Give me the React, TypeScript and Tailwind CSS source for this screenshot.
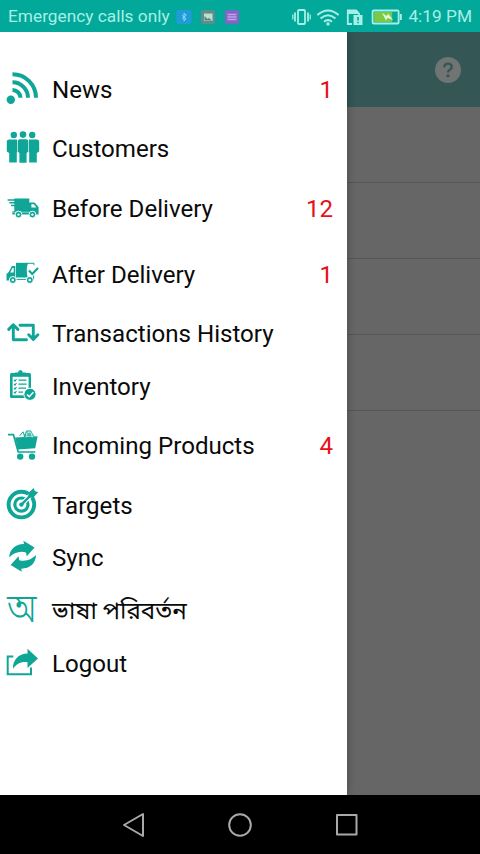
import React from 'react';

const TEAL = '#0fa697';

const icons: Record<string, React.ReactNode> = {
  news: (
    <>
      <circle cx="10.8" cy="31.8" r="4.2" fill={TEAL} />
      <g fill="none" stroke={TEAL} strokeWidth="4">
        <path d="M12.5 6.3A23.5 23.5 0 0 1 36 29.8" />
        <path d="M12.5 14.3A15.5 15.5 0 0 1 28 29.8" />
        <path d="M12.5 22A8 8 0 0 1 20.5 29.8" />
      </g>
    </>
  ),
  customers: (
    <g fill={TEAL}>
      <circle cx="13.8" cy="8" r="3.2" />
      <circle cx="23" cy="7.6" r="3.3" />
      <circle cx="32.2" cy="8" r="3.2" />
      <path d="M9 12.6h8.2v12.6h-.4v10.3H9.2V26L6.8 24.4v-9.6Q6.8 12.6 9 12.6z" />
      <path d="M37 12.6h-8.2v12.6h.4v10.3h7.6V26l2.4-1.6v-9.6q0-2.2-2.2-2.2z" />
      <path d="M19.8 12.2h6.4q2 0 2 2.2v10l-1.6 1.8v9.6h-7.2v-9.6l-1.6-1.8v-10q0-2.2 2-2.2z" />
    </g>
  ),
  before: (
    <>
      <path d="M7.6 13H16M9.3 15.8H16M11 18.5H16" stroke={TEAL} strokeWidth="1.5" />
      <path d="M14.3 11.5H29.3V15.4H34.6L38.6 20.2V27.5H12.4V24.2H14.3z" fill={TEAL} />
      <path d="M31.4 17.3H33.8L36.4 20.5H31.4z" fill="#fff" />
      <path d="M13 25.2H29" stroke="#fff" strokeWidth=".5" />
      <g fill={TEAL} stroke="#fff" strokeWidth="1">
        <circle cx="18.5" cy="27.6" r="3.4" />
        <circle cx="32.4" cy="27.6" r="3.4" />
      </g>
      <circle cx="18.5" cy="27.6" r="1.2" fill="#fff" />
      <circle cx="32.4" cy="27.6" r="1.2" fill="#fff" />
    </>
  ),
  after: (
    <>
      <path d="M15.3 13H12L8.7 19L6.5 21V27.6H15.3z" fill={TEAL} />
      <path d="M13.7 15H12.5L10.2 19.4H13.7z" fill="#fff" />
      <path d="M16 10H28Q25.6 17 27.8 24.6H16z" fill={TEAL} />
      <path d="M16.2 10.3H34V12.2M15.3 26.4H33.6V22.5" fill="none" stroke={TEAL} strokeWidth="1" />
      <path d="M29 17.6L32.2 21L38 15" fill="none" stroke={TEAL} strokeWidth="2.2" />
      <g fill={TEAL} stroke="#fff" strokeWidth="1">
        <circle cx="12.8" cy="27" r="3.5" />
        <circle cx="29.8" cy="27" r="3.5" />
      </g>
      <circle cx="12.8" cy="27" r="1.3" fill="#fff" />
      <circle cx="29.8" cy="27" r="1.3" fill="#fff" />
    </>
  ),
  transactions: (
    <g fill="none" stroke={TEAL} strokeWidth="2.9" strokeLinecap="round" strokeLinejoin="round">
      <path d="M8.7 17.4L13.3 12.8L17.9 17.4M13.3 13.5V27.8H26.5" />
      <path d="M20 13.2H33.3V27M28.7 22.8L33.3 27.4L37.9 22.8" />
    </g>
  ),
  inventory: (
    <>
      <rect x="10" y="8" width="21" height="25" rx="1.5" fill={TEAL} />
      <path d="M15 11.2V7.5H18Q18.4 5 20.4 5T22.8 7.5H25.8V11.2z" fill={TEAL} />
      <rect x="12.6" y="11.8" width="16" height="18.5" fill="#fff" />
      <path d="M14 15l1 1l1.5-2M14 19l1 1l1.5-2M14 23l1 1l1.5-2M14 27l1 1l1.5-2M18.5 15.2H26.5M18.5 19.2H26.5M18.5 23.2H26M18.5 27.2H23" fill="none" stroke={TEAL} strokeWidth="1.2" />
      <circle cx="30" cy="29.3" r="6.1" fill={TEAL} stroke="#fff" strokeWidth="1" />
      <path d="M27 29.5L29.2 31.7L33.4 27.2" fill="none" stroke="#fff" strokeWidth="1.5" />
    </>
  ),
  incoming: (
    <>
      <path d="M8 10.6H13.4L18.2 28H35.3" fill="none" stroke={TEAL} strokeWidth="1.7" />
      <path d="M15 13.4L24 13L25.5 9.6L27 13L37.6 12.2L35.2 24.2L17.8 25.4z" fill={TEAL} />
      <path d="M23.5 12.6L26.2 6.6L30.8 6.2L34.6 12.6z" fill={TEAL} opacity=".75" />
      <path d="M26 13.5Q26.5 8 29.2 8Q31.8 8 32.2 13.5" fill="none" stroke="#fff" strokeWidth=".8" />
      <path d="M19.7 11.8L23 7.8L24.5 12" fill="none" stroke={TEAL} strokeWidth="1" />
      <circle cx="20.2" cy="32.6" r="3.2" fill={TEAL} />
      <circle cx="32" cy="32.6" r="3.2" fill={TEAL} />
    </>
  ),
  targets: (
    <>
      <circle cx="21.4" cy="20.6" r="12.8" fill="none" stroke={TEAL} strokeWidth="3.9" />
      <circle cx="21.4" cy="20.6" r="6.6" fill="none" stroke={TEAL} strokeWidth="3.2" />
      <path d="M22.4 19.6L33.5 8.5" stroke="#fff" strokeWidth="4.6" />
      <circle cx="21.4" cy="20.6" r="2.2" fill={TEAL} />
      <path d="M21.4 20.6L34 8" stroke={TEAL} strokeWidth="2.4" />
      <path d="M28.2 12.8L28.6 8.8L33.6 4L34.8 7.1L38.2 8.2L33.6 13.2L29.4 14z" fill={TEAL} />
    </>
  ),
  sync: (
    <g fill={TEAL}>
      <path d="M9.2 21.5C9.4 13.2 15.5 7.8 24 7.9L23.4 4.8L34.6 11.6L26.7 20.3L26 16.4C19.4 14.6 13.6 17 9.2 21.5z" />
      <path transform="rotate(180 22.6 20.3)" d="M9.2 21.5C9.4 13.2 15.5 7.8 24 7.9L23.4 4.8L34.6 11.6L26.7 20.3L26 16.4C19.4 14.6 13.6 17 9.2 21.5z" />
    </g>
  ),
  logout: (
    <>
      <path d="M13.3 14.6H7.7V32.2H31V25.5" fill="none" stroke={TEAL} strokeWidth="2" />
      <path d="M13 27C12.5 18 18.5 11.8 27.5 11.6V6.8L38 16.4L27.5 26V20.3C21 19.4 16.5 21.8 13 27z" fill={TEAL} />
    </>
  ),
};

const menu = [
  { icon: 'news', label: 'News', count: 1, gap: '' },
  { icon: 'customers', label: 'Customers', gap: 'mt-[7px]' },
  { icon: 'before', label: 'Before Delivery', count: 12, gap: 'mt-2' },
  { icon: 'after', label: 'After Delivery', count: 1, gap: 'mt-3.5' },
  { icon: 'transactions', label: 'Transactions History', gap: 'mt-[7px]' },
  { icon: 'inventory', label: 'Inventory', gap: 'mt-px' },
  { icon: 'incoming', label: 'Incoming Products', count: 4, gap: 'mt-[7px]' },
  { icon: 'targets', label: 'Targets', gap: 'mt-2' },
  { icon: 'sync', label: 'Sync', gap: '' },
  { icon: 'language', label: 'ভাষা পরিবর্তন', gap: 'mt-px' },
  { icon: 'logout', label: 'Logout', gap: 'mt-px' },
];

const StatusBar: React.FC = () => (
  <header className="flex h-8 shrink-0 items-center bg-[#02a899] pl-2 pr-2 pt-px text-[#a5f0e6]">
    <span className="whitespace-nowrap text-[17.3px]">Emergency calls only</span>
    <svg className="ml-[6px]" width="66" height="16" viewBox="0 0 66 16">
      <rect x=".5" y="1" width="15" height="14" rx="2" fill="#1f9bd8" />
      <path d="M8 12V4L10.2 6.2L6 9.8M6 6.2L10 9.8L8 12" fill="none" stroke="#8fe0f5" strokeWidth=".9" />
      <rect x="25" y="1" width="14" height="14" rx="2" fill="#5d8f88" />
      <rect x="28" y="4.5" width="8.5" height="7.5" fill="#b9ded6" />
      <path d="M28.5 11.5V7L31.5 10L33 9L36 11.5z" fill="#55837d" />
      <rect x="49" y="1" width="14" height="14" rx="2" fill="#8066c4" />
      <path d="M51.5 5.5H60.5M51.5 8H60.5M51.5 10.5H60.5" stroke="#c4a2ea" strokeWidth="1.5" />
    </svg>
    <svg className="ml-auto" width="112" height="20" viewBox="0 0 112 20">
      <g fill="none" stroke="#a5f0e6" strokeWidth="1.8">
        <rect x="6" y="3" width="7" height="14" rx="1" />
        <path d="M3 5.5V14.5M16 5.5V14.5" />
        <path d="M.8 7.5V12.5M18.2 7.5V12.5" strokeWidth="1.2" />
        <path d="M25.3 8Q36 -1 46.7 8M28.5 11.5Q36 5 43.5 11.5M32 14.8Q36 11.5 40 14.8" strokeWidth="2" />
        <path d="M60 17H55.8V3.5H64L67 6.5V8" />
        <rect x="80.6" y="3.5" width="26" height="13" rx="1" />
      </g>
      <circle cx="36" cy="17" r="1.7" fill="#a5f0e6" />
      <rect x="61.5" y="8" width="9" height="10" fill="#a5f0e6" />
      <path d="M56 3H65L67 7H56z" fill="#a5f0e6" />
      <path d="M66 10V13.5M66 14.8V16.3" stroke="#02a899" strokeWidth="1.6" />
      <rect x="82.2" y="5" width="18" height="10" fill="#7cc944" />
      <path d="M90 6L95 9L96 6.5L101 13L95.5 11L94 13.5z" fill="#d7f9dc" />
      <path d="M108.8 7V13" stroke="#a5f0e6" strokeWidth="2" />
    </svg>
    <span className="ml-1 whitespace-nowrap text-[17.3px]">4:19 PM</span>
  </header>
);

const MenuIcon: React.FC<{ name: string }> = ({ name }) => {
  // the language entry uses a Bengali letter as its icon
  if (name === 'language') {
    return (
      <span className="flex h-11 w-11 shrink-0 items-center pb-[7px] pl-[7px]">
        <span className="origin-left scale-x-[1.04] scale-y-[1.24] text-[33px] font-light leading-[50px] text-[#0fa697]">অ</span>
      </span>
    );
  }

  return (
    <svg className="shrink-0" width="44" height="44" viewBox="0 0 44 44">
      {icons[name]}
    </svg>
  );
};

const Drawer: React.FC = () => (
  <nav className="z-10 w-[347px] shrink-0 bg-white pt-8 shadow-[0_0_8px_rgba(0,0,0,0.3)]">
    {menu.map((item) => (
      <div key={item.icon} className={`flex h-[52px] items-center pr-[14px] ${item.gap}`}>
        <MenuIcon name={item.icon} />
        <span className="ml-2 whitespace-nowrap text-[24.1px] text-[#0a0a0a]">{item.label}</span>
        {item.count && <span className="ml-auto text-[24.1px] text-[#e5101c]">{item.count}</span>}
      </div>
    ))}
  </nav>
);

const Backdrop: React.FC = () => (
  <main className="flex-1 bg-[#666]">
    <div className="flex h-[75px] items-center justify-end bg-[#345655] pr-[19px]">
      <svg width="26" height="26" viewBox="0 0 26 26">
        <circle cx="13" cy="13" r="13" fill="#707473" />
        <path d="M9.3 10.2Q9.3 6.6 13 6.6T16.7 10Q16.7 11.6 14.8 12.8Q13 13.9 13 15.6" fill="none" stroke="#345655" strokeWidth="2.4" />
        <circle cx="13" cy="18.8" r="1.6" fill="#345655" />
      </svg>
    </div>
    {[0, 1, 2, 3].map((row) => (
      <div key={row} className="h-[76px] border-b border-[#565656]" />
    ))}
  </main>
);

const NavigationBar: React.FC = () => (
  <footer className="flex h-[59px] shrink-0 items-center justify-center bg-black">
    <svg width="240" height="28" viewBox="0 0 240 28" fill="none" stroke="#a9a9a9" strokeWidth="2" strokeLinejoin="round">
      <path d="M23 3V25L4 14z" />
      <circle cx="120" cy="14" r="10.8" />
      <rect x="217" y="4" width="19.5" height="19.5" />
    </svg>
  </footer>
);

const App: React.FC = () => {
  return (
    <div className="flex h-[854px] w-[480px] flex-col overflow-hidden font-['Roboto','Noto_Sans_Bengali','Noto_Sans',sans-serif]">
      <StatusBar />
      <div className="flex min-h-0 flex-1 overflow-hidden">
        <Drawer />
        <Backdrop />
      </div>
      <NavigationBar />
    </div>
  );
};

export default App;
